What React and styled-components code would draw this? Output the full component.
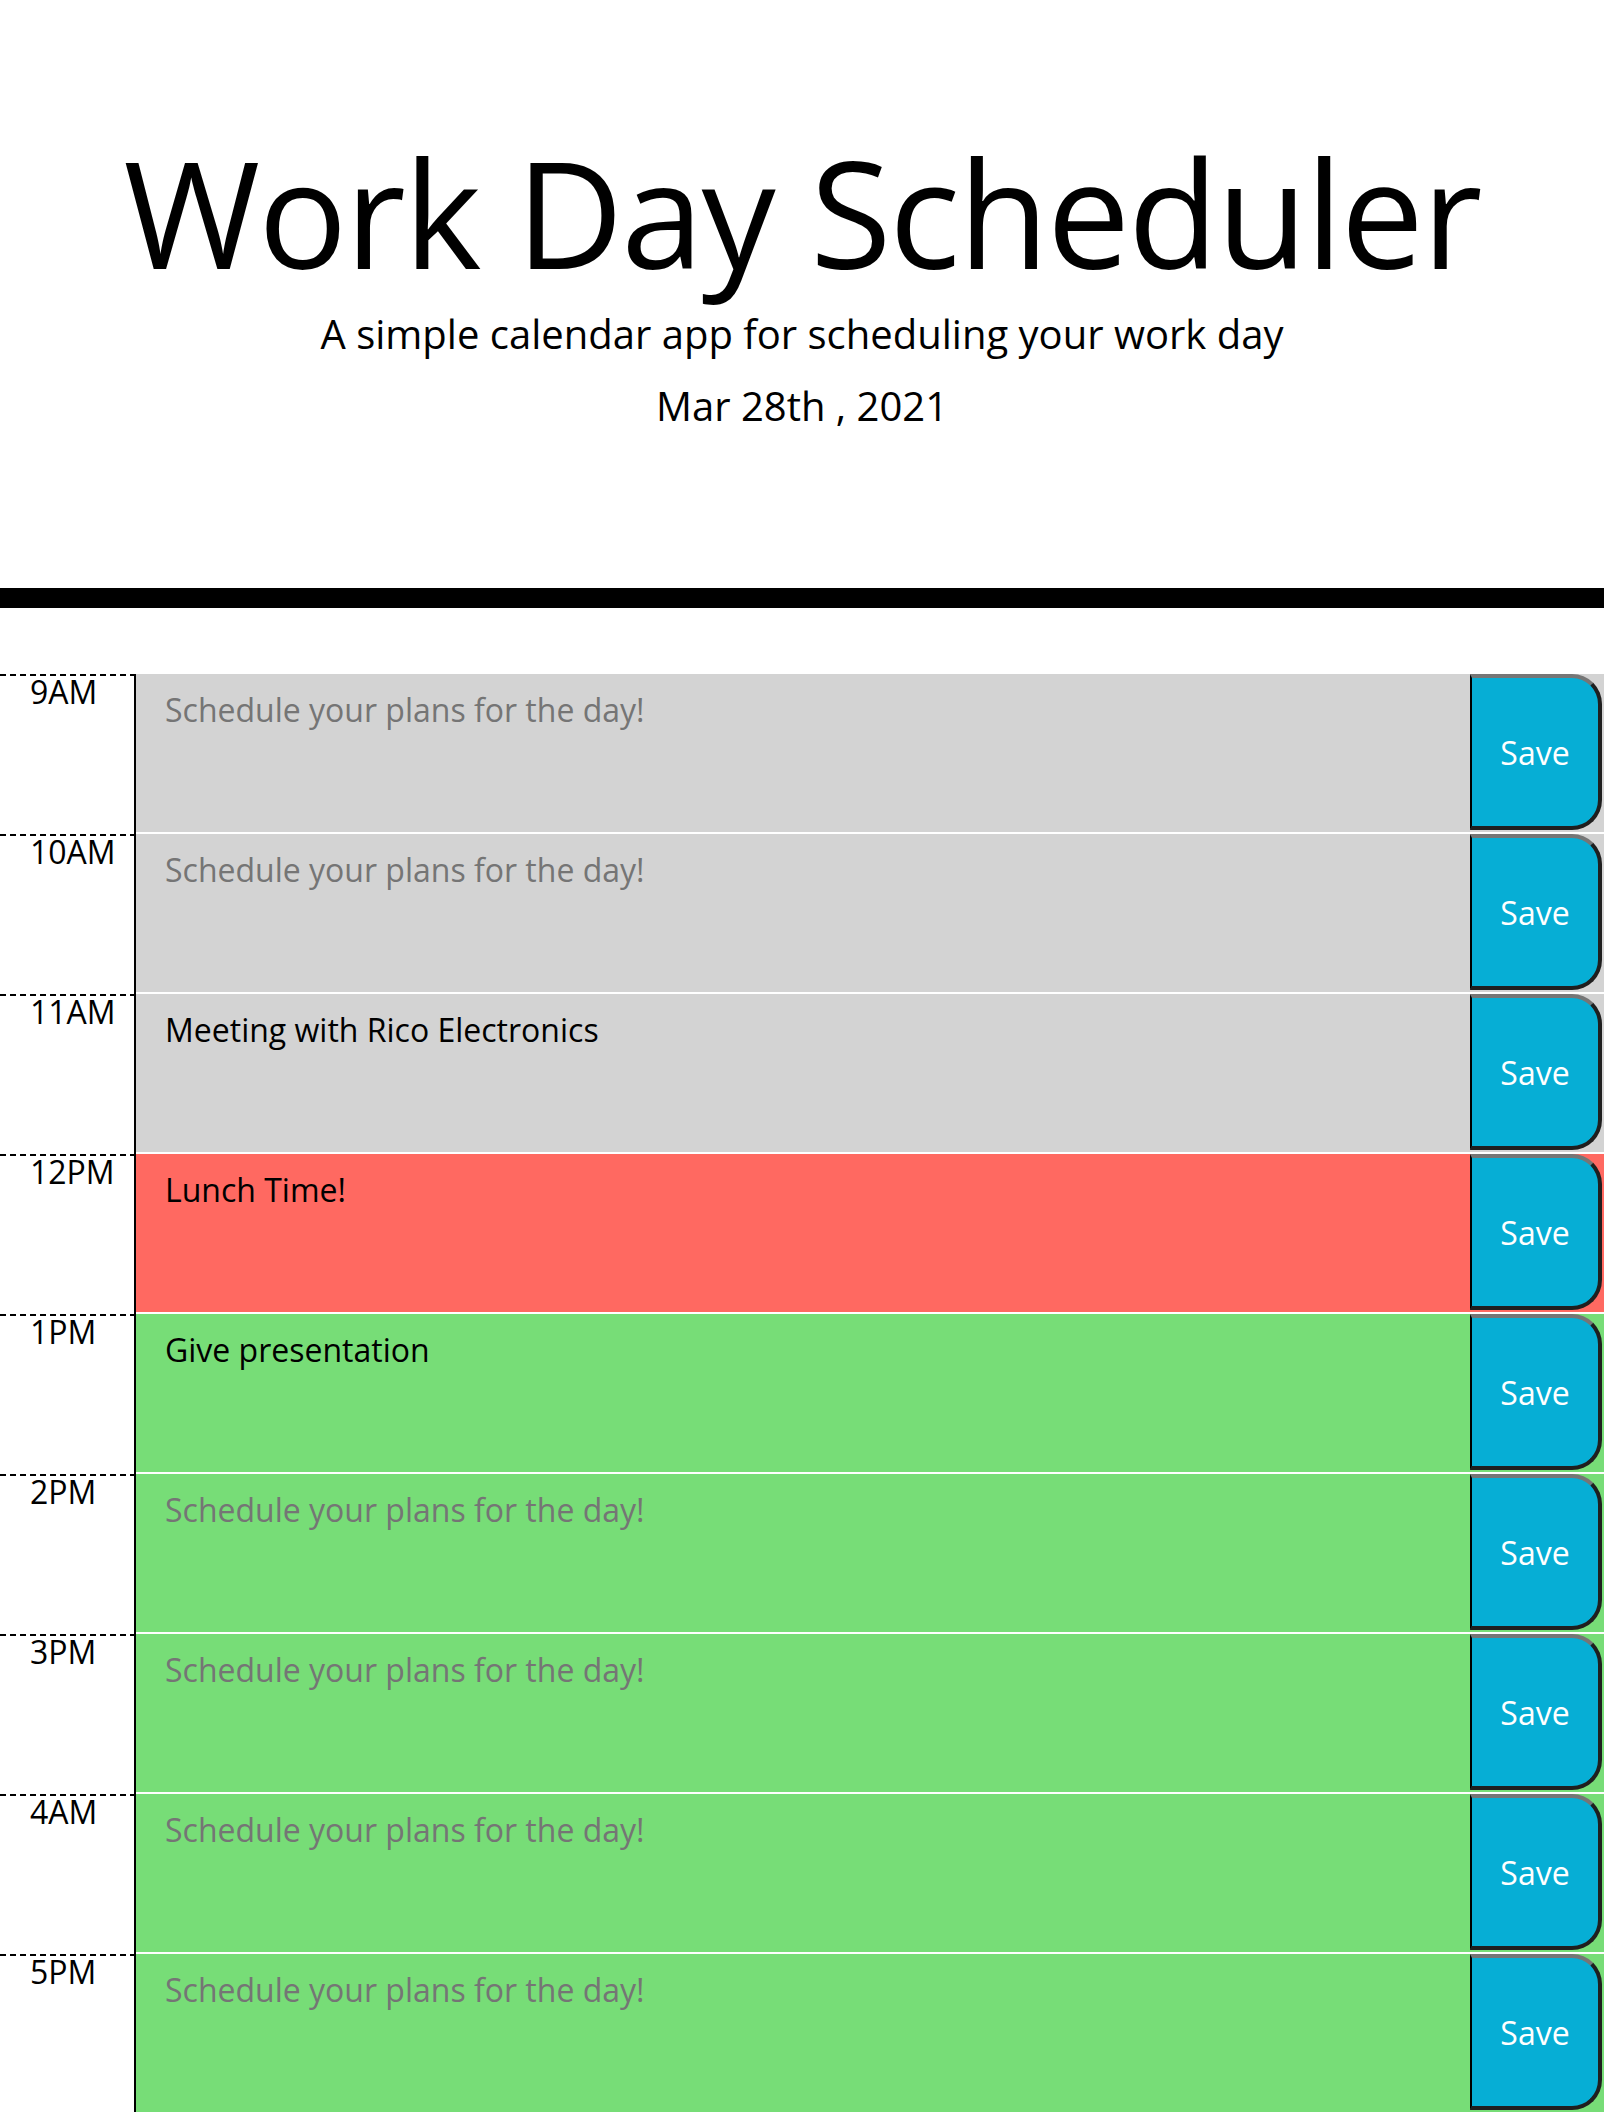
import React from "react";
import styled, { createGlobalStyle } from "styled-components";

const GlobalStyle = createGlobalStyle`
  html, body { margin: 0; padding: 0; background: #ffffff; }
  body { font-family: "Open Sans", "Noto Sans", sans-serif; color: #000; }
  * { box-sizing: border-box; }
`;

const Header = styled.header`
  text-align: center;
  padding: 121px 0 152px;
  border-bottom: 20px solid #000;
  margin-bottom: 66px;
`;

const Title = styled.h1`
  margin: 0;
  font-size: 148px;
  line-height: 181px;
  font-weight: 400;
  letter-spacing: -2px;
`;

const Lead = styled.p`
  margin: ${(p) => p.$mt}px 0 0;
  font-size: 40px;
  line-height: 60px;
  font-weight: 400;
`;

const Rows = styled.main`
  display: flex;
  flex-direction: column;
`;

const Row = styled.div`
  display: grid;
  grid-template-columns: 136px 1fr;
  height: 160px;
`;

const Hour = styled.div`
  background: #ffffff;
  border-top: 2px dashed #000;
  border-right: 2px solid #000;
  padding-left: 30px;
  font-size: 32px;
  line-height: 32px;
`;

const colors = { past: "#d3d3d3", present: "#ff6961", future: "#77dd77" };

const Slot = styled.div`
  display: grid;
  grid-template-columns: 1fr 134px;
  background: ${(p) => colors[p.$state]};
  border-bottom: 2px solid #ffffff;
`;

const Entry = styled.textarea`
  background: transparent;
  border: none;
  resize: none;
  outline: none;
  font-family: "Open Sans", "Noto Sans", sans-serif;
  font-size: 32px;
  line-height: 48px;
  padding: 12px 29px;
  color: #000;
  height: 158px;
  &::placeholder { color: #757575; }
`;

const SaveBtn = styled.button`
  height: 156px;
  margin-right: 2px;
  background: #06aed5;
  color: #ffffff;
  font-family: "Open Sans", "Noto Sans", sans-serif;
  font-size: 32px;
  border-style: solid;
  border-width: 4px 4px 4px 2px;
  border-color: #767676 #1f1f1f #1f1f1f #000000;
  border-top-right-radius: 30px;
  border-bottom-right-radius: 30px;
  padding: 0;
  cursor: pointer;
`;

const data = [
  { h: "9AM", s: "past", t: "" },
  { h: "10AM", s: "past", t: "" },
  { h: "11AM", s: "past", t: "Meeting with Rico Electronics" },
  { h: "12PM", s: "present", t: "Lunch Time!" },
  { h: "1PM", s: "future", t: "Give presentation" },
  { h: "2PM", s: "future", t: "" },
  { h: "3PM", s: "future", t: "" },
  { h: "4AM", s: "future", t: "" },
  { h: "5PM", s: "future", t: "" },
];

export default function App() {
  return (
    <>
      <GlobalStyle />
      <Header>
        <Title>Work Day Scheduler</Title>
        <Lead $mt={2}>A simple calendar app for scheduling your work day</Lead>
        <Lead $mt={12}>Mar 28th , 2021</Lead>
      </Header>
      <Rows>
        {data.map((r) => (
          <Row key={r.h}>
            <Hour>{r.h}</Hour>
            <Slot $state={r.s}>
              <Entry
                defaultValue={r.t}
                placeholder="Schedule your plans for the day!"
              />
              <SaveBtn>Save</SaveBtn>
            </Slot>
          </Row>
        ))}
      </Rows>
    </>
  );
}
